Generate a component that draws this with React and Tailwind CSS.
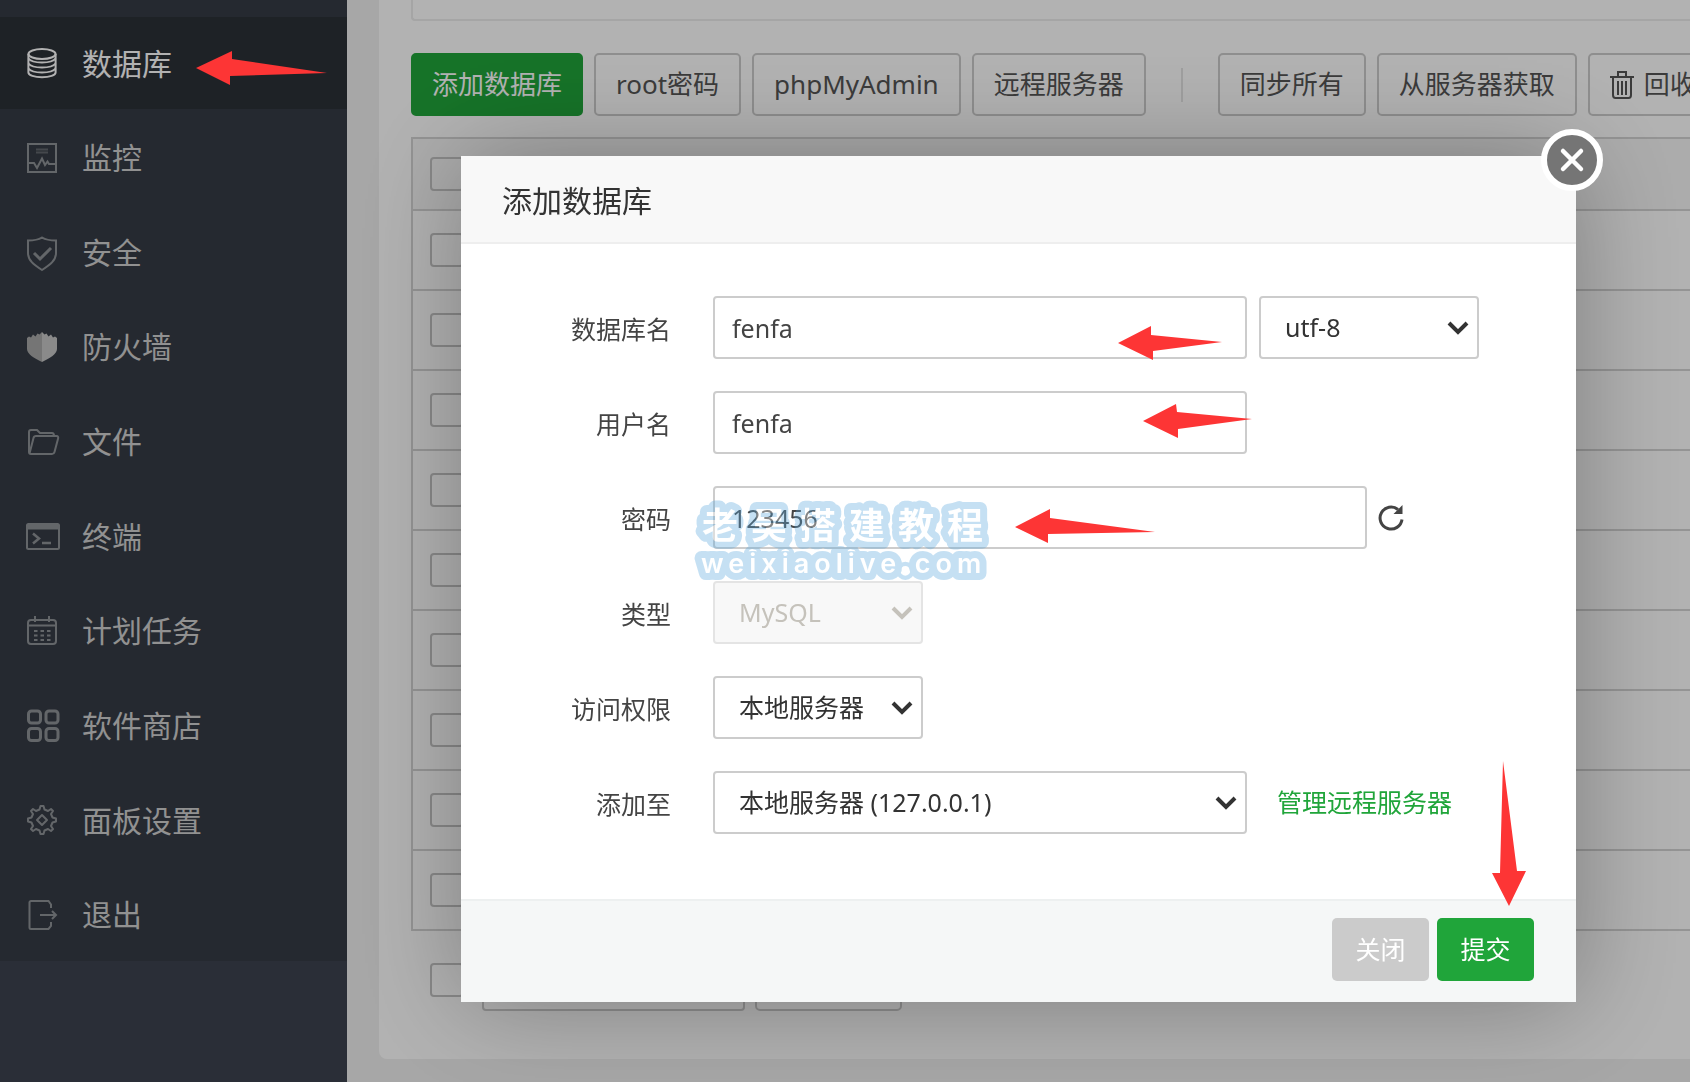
import React, { useState } from 'react';

const IconBase = ({ children, strokeWidth = 2 }) => (
    <svg
        className="size-[30px] shrink-0"
        viewBox="0 0 30 30"
        fill="none"
        stroke="currentColor"
        strokeWidth={strokeWidth}
        overflow="visible"
        aria-hidden="true"
    >
        {children}
    </svg>
);

const DatabaseIcon = () => (
    <IconBase>
        <ellipse cx="15" cy="6" rx="13.6" ry="5" />
        <path d="M1.4 6v18.5c0 2.6 6 4.8 13.6 4.8s13.6-2.2 13.6-4.8V6" />
        <path d="M1.4 10.5c2 2.6 7 4 13.6 4s11.6-1.4 13.6-4M1.4 15.5c2 2.6 7 4 13.6 4s11.6-1.4 13.6-4M1.4 20.5c2 2.6 7 4 13.6 4s11.6-1.4 13.6-4" />
    </IconBase>
);

const MonitorIcon = () => (
    <IconBase>
        <rect x="1" y="1" width="28" height="28" />
        <path d="M9 6.5h12M9 9.5h12" opacity="0.5" />
        <path d="M2 20h5l3 5 5-9.5 3 6.5 2.5-3.5L22 21h6" />
    </IconBase>
);

const ShieldIcon = () => (
    <IconBase>
        <path d="M15 .5c4 2.500 9 3 14 3V16c0 7.500-6 12-14 17C7 28 1 23.500 1 16V3.500c5 0 10-.5 14-3z" />
        <path d="M7 16l6 6L24 11" strokeWidth="3" />
    </IconBase>
);

const FirewallIcon = () => (
    <IconBase strokeWidth="0">
        <path d="M0 6l2-1.5 2 1 2-3 2.500 2 2-3 2 1L15 0v30C7 26 0 22 0 17z" fill="#a8a8a8" />
        <path d="M30 6l-2-1.5-2 1-2-3-2.500 2-2-3-2 1L15 0v30c8-4 15-8 15-13z" fill="#c6c6c6" />
    </IconBase>
);

const FolderIcon = () => (
    <IconBase>
        <path d="M2 25V5c0-1 .6-2 2-2h6l3 3h12c1.5 0 2 1 2 3" />
        <path d="M2.5 26.5L6.5 11c.3-1.2 1-2 2.500-2h20.500c1.5 0 2 1 1.6 2.500L27.500 25c-.4 1.5-1 2-2.500 2H4c-1.200 0-2-.5-2-2" />
    </IconBase>
);

const TerminalIcon = () => (
    <IconBase>
        <rect x="0" y="3" width="32" height="25" rx="1.5" />
        <path d="M0 6h32" strokeWidth="5" />
        <path d="M6 12.500l6 5-6 5M15 22h9" strokeWidth="2.500" />
    </IconBase>
);

const CalendarIcon = () => (
    <IconBase>
        <rect x="1" y="4" width="28" height="24" rx="3" />
        <path d="M1 9.5h28M8 0v6M22 0v6" />
        <path d="M7 15h17M7 19.5h17M7 24h17" strokeDasharray="3.5 3" />
    </IconBase>
);

const StoreIcon = () => (
    <IconBase strokeWidth="3">
        <rect x="1.5" y="0" width="12" height="12" rx="3" />
        <rect x="19" y="0" width="12" height="12" rx="3" />
        <rect x="1.5" y="17.5" width="12" height="12" rx="3" />
        <rect x="19" y="17.5" width="12" height="12" rx="3" />
    </IconBase>
);

const GearIcon = () => (
    <IconBase>
        <path
            d="M13.5 1h3l1 3.5 3.5 1.5 3-2 2 2-2 3 1.5 3.5 3.5 1v3l-3.5 1-1.500 3.500 2 3-2 2-3-2-3.500 1.500-1 3.500h-3l-1-3.500-3.500-1.500-3 2-2-2 2-3-1.500-3.500-3.500-1v-3l3.500-1 1.500-3.500-2-3 2-2 3 2 3.500-1.500z"
            strokeLinejoin="round"
        />
        <path d="M15 10l5 5-5 5-5-5z" strokeLinejoin="round" />
    </IconBase>
);

const ExitIcon = () => (
    <IconBase>
        <path d="M24 8V4.5L21.5 1H4c-.8 0-1.500.6-1.500 1.500v25c0 .8.7 1.500 1.500 1.500h17.500l2.500-3V22" />
        <path d="M13 15h15M25 11l4 4-4 4" />
    </IconBase>
);

const TrashIcon = () => (
    <svg className="h-[28px] w-[24px]" viewBox="0 0 24 28" fill="none" stroke="currentColor" strokeWidth="2" aria-hidden="true">
        <path d="M0 6h24M8 5V1h8v4M3 7v17c0 1.5 1 3 2.500 3h13c1.500 0 2.500-1.500 2.500-3V7M8 10v14M12 10v14M16 10v14" />
    </svg>
);

const menuItems = [
    { name: '数据库', icon: DatabaseIcon, active: true },
    { name: '监控', icon: MonitorIcon },
    { name: '安全', icon: ShieldIcon },
    { name: '防火墙', icon: FirewallIcon },
    { name: '文件', icon: FolderIcon },
    { name: '终端', icon: TerminalIcon },
    { name: '计划任务', icon: CalendarIcon },
    { name: '软件商店', icon: StoreIcon },
    { name: '面板设置', icon: GearIcon },
    { name: '退出', icon: ExitIcon },
];

const Sidebar = () => (
    <aside className="w-[347px] shrink-0 bg-[#3d424f]">
        <ul className="flex h-[961px] flex-col justify-between bg-[#363c46] pt-[17px]">
            {menuItems.map(({ name, icon: Icon, active }) => (
                <li key={name} className={active ? 'bg-[#2c3137] text-white' : 'text-[#8f9397]'}>
                    <a href="#" className="flex h-[92px] items-center gap-[25px] pl-[27px]">
                        <Icon />
                        <span className={active ? 'text-[30px]' : 'text-[30px] text-[#d0d0d0]'}>{name}</span>
                    </a>
                </li>
            ))}
        </ul>
    </aside>
);

const ToolButton = ({ children, primary }) => (
    <button
        type="button"
        className={
            primary
                ? 'flex h-[63px] shrink-0 items-center rounded-[5px] border-2 border-[#20a53a] bg-[#20a53a] px-[19px] whitespace-nowrap text-white'
                : 'flex h-[63px] shrink-0 items-center gap-[10px] rounded-[5px] border-2 border-[#cccccc] px-[20px] whitespace-nowrap text-[#555555]'
        }
    >
        {children}
    </button>
);

const RowCheckbox = ({ label }) => (
    <input
        type="checkbox"
        aria-label={label}
        className="block size-[34px] appearance-none rounded-[4px] border-2 border-[#c4c4c4]"
    />
);

const DatabaseTable = () => (
    <table className="w-full border-separate border-spacing-0 border-t-2 border-l-2 border-[#d4d4d4]">
        <thead>
            <tr className="h-[72px] bg-[#f6f6f6]">
                <th className="w-[80px] border-b-2 border-[#d4d4d4] pl-[17px]">
                    <RowCheckbox label="全选" />
                </th>
                <th className="border-b-2 border-[#d4d4d4]" />
            </tr>
        </thead>
        <tbody>
            {Array.from({ length: 9 }, (_, i) => (
                <tr key={i} className="h-[80px]">
                    <td className="border-b-2 border-[#d4d4d4] pl-[17px]">
                        <RowCheckbox label={`选择第 ${i + 1} 行`} />
                    </td>
                    <td className="border-b-2 border-[#d4d4d4]" />
                </tr>
            ))}
        </tbody>
    </table>
);

const Chevron = () => (
    <svg
        className="pointer-events-none absolute top-1/2 right-[10px] h-[14px] w-[22px] -translate-y-1/2"
        viewBox="0 0 22 14"
        fill="none"
        stroke="currentColor"
        strokeWidth="4"
        aria-hidden="true"
    >
        <path d="M2 2l9 9 9-9" />
    </svg>
);

const Select = ({ id, options, className, disabled, label }) => (
    <div className={`relative ${className} ${disabled ? 'text-[#c5c2bb]' : 'text-[#333333]'}`}>
        <select
            id={id}
            aria-label={label}
            disabled={disabled}
            className="h-[63px] w-full appearance-none rounded-[4px] border-2 border-[#cccccc] bg-white pl-[24px] disabled:border-[#e4e4e4] disabled:bg-[#f8f8f8] disabled:opacity-100"
        >
            {options.map((option) => (
                <option key={option}>{option}</option>
            ))}
        </select>
        <Chevron />
    </div>
);

const FormRow = ({ label, htmlFor, children }) => (
    <div className="flex h-[63px] items-center">
        <label htmlFor={htmlFor} className="mr-[42px] w-[210px] shrink-0 pt-[4px] text-right">
            {label}
        </label>
        {children}
    </div>
);

const inputClass = 'h-[63px] rounded-[4px] border-2 border-[#cccccc] bg-white pl-[17px] text-[#444444] outline-none';

const AddDatabaseModal = () => {
    const [form, setForm] = useState({ name: 'fenfa', user: 'fenfa', password: '123456' });

    const handleChange = (e) => {
        setForm({ ...form, [e.target.name]: e.target.value });
    };

    return (
        <div className="fixed inset-0 bg-black/30 pt-[156px] pr-[114px] pl-[461px]">
            <form
                className="relative bg-white text-[25px] text-[#444444] shadow-[2px_2px_100px_rgba(0,0,0,0.3)]"
                onSubmit={(e) => e.preventDefault()}
            >
                <h2 className="flex h-[88px] items-center border-b-2 border-[#eeeeee] bg-[#f8f8f8] pt-[2px] pl-[41px] text-[30px] text-[#333333]">
                    添加数据库
                </h2>
                <button
                    type="button"
                    aria-label="关闭弹窗"
                    className="absolute -top-[27px] -right-[27px] flex size-[62px] items-center justify-center rounded-full border-[6px] border-white bg-[#757575] text-white"
                >
                    <svg className="size-[26px]" viewBox="0 0 26 26" stroke="currentColor" strokeWidth="4.500" strokeLinecap="round" aria-hidden="true">
                        <path d="M4 4l18 18M22 4L4 22" />
                    </svg>
                </button>

                <div className="flex flex-col gap-[32px] pt-[52px] pb-[65px]">
                    <FormRow label="数据库名" htmlFor="db-name">
                        <input id="db-name" name="name" value={form.name} onChange={handleChange} className={`${inputClass} w-[534px]`} />
                        <Select label="编码" options={['utf-8']} className="ml-[12px] w-[220px]" />
                    </FormRow>
                    <FormRow label="用户名" htmlFor="db-user">
                        <input id="db-user" name="user" value={form.user} onChange={handleChange} className={`${inputClass} w-[534px]`} />
                    </FormRow>
                    <FormRow label="密码" htmlFor="db-password">
                        <input id="db-password" name="password" value={form.password} onChange={handleChange} className={`${inputClass} w-[654px]`} />
                        <button type="button" aria-label="随机密码" className="ml-[11px] text-[#444444]">
                            <svg className="size-[26px]" viewBox="0 0 26 26" fill="none" stroke="currentColor" strokeWidth="3" aria-hidden="true">
                                <path d="M24 14.500A11 11 0 1 1 20 4.500" />
                                <path d="M24.500 0v9h-9z" fill="currentColor" stroke="none" />
                            </svg>
                        </button>
                    </FormRow>
                    <FormRow label="类型" htmlFor="db-type">
                        <Select id="db-type" options={['MySQL']} className="w-[210px]" disabled />
                    </FormRow>
                    <FormRow label="访问权限" htmlFor="db-access">
                        <Select id="db-access" options={['本地服务器']} className="w-[210px]" />
                    </FormRow>
                    <FormRow label="添加至" htmlFor="db-server">
                        <Select id="db-server" options={['本地服务器 (127.0.0.1)']} className="w-[534px]" />
                        <a href="#" className="ml-[30px] text-[#20a53a]">管理远程服务器</a>
                    </FormRow>
                </div>

                <div className="flex justify-end gap-[8px] border-t-2 border-[#edf0f0] bg-[#f5f7f7] pt-[17px] pr-[42px] pb-[21px] text-white">
                    <button type="button" className="h-[63px] w-[97px] rounded-[5px] bg-[#cbcbcb]">关闭</button>
                    <button type="submit" className="h-[63px] w-[97px] rounded-[5px] bg-[#20a53a]">提交</button>
                </div>
            </form>
        </div>
    );
};

const Watermark = () => (
    <svg
        className="pointer-events-none fixed top-[490px] left-[690px] h-[100px] w-[320px] [paint-order:stroke] font-bold opacity-35"
        fill="#ffffff"
        stroke="#5ca8dd"
        strokeWidth="14"
        strokeLinejoin="round"
    >
        <text x="12" y="49" className="text-[36px] tracking-[13px]">老吴搭建教程</text>
        <text x="11" y="83" className="font-['Inter','Noto_Sans_CJK_SC',sans-serif] text-[27px] font-semibold tracking-[5px]">
            weixiaolive.com
        </text>
    </svg>
);

// Hand-drawn arrows pointing at each step
const arrows = [
    '196,68 232,51 232,59 327,73 230,76 230,85',
    '1118,343 1151,326 1151,335 1222,342 1153,351 1153,360',
    '1143,421 1176,404 1177,412 1252,419 1178,429 1178,438',
    '1015,527 1050,509 1050,518 1155,532 1048,534 1048,543',
    '1509,906 1492,873 1500,873 1503,761 1517,871 1526,871',
];

const Arrows = () => (
    <svg className="pointer-events-none fixed inset-0 size-full" fill="#fd3535" aria-hidden="true">
        {arrows.map((points) => (
            <polygon key={points} points={points} />
        ))}
    </svg>
);

const App = () => {
    return (
        <div className="flex min-h-screen overflow-hidden bg-[#f0f0f0] font-['Noto_Sans','Noto_Sans_CJK_SC',sans-serif] text-[26px]">
            <Sidebar />
            <main className="min-w-0 flex-1 overflow-hidden pb-[23px] pl-[32px]">
                <div className="rounded-bl-[8px] bg-white pb-[48px] pl-[32px]">
                    <div className="h-[21px] rounded-bl-[4px] border-b-2 border-l-2 border-[#ececec]" />

                    {/* Toolbar */}
                    <div className="flex items-center gap-[11px] overflow-hidden pt-[32px] pb-[21px]">
                        <ToolButton primary>添加数据库</ToolButton>
                        <ToolButton>root密码</ToolButton>
                        <ToolButton>phpMyAdmin</ToolButton>
                        <ToolButton>远程服务器</ToolButton>
                        <span className="mx-[24px] h-[34px] w-[2px] shrink-0 bg-[#e4e4e4]" />
                        <ToolButton>同步所有</ToolButton>
                        <ToolButton>从服务器获取</ToolButton>
                        <ToolButton>
                            <TrashIcon />
                            回收站
                        </ToolButton>
                    </div>

                    <DatabaseTable />

                    {/* Batch actions */}
                    <div className="flex items-center gap-[10px] pt-[17px] pl-[19px]">
                        <RowCheckbox label="全选" />
                        <select aria-label="批量操作" className="ml-[8px] h-[63px] w-[263px] appearance-none rounded-[4px] border-2 border-[#cccccc]" />
                        <button type="button" aria-label="批量操作" className="h-[63px] w-[147px] rounded-[5px] border-2 border-[#cccccc]" />
                    </div>
                </div>
            </main>

            <AddDatabaseModal />
            <Watermark />
            <Arrows />
        </div>
    );
};

export default App;
